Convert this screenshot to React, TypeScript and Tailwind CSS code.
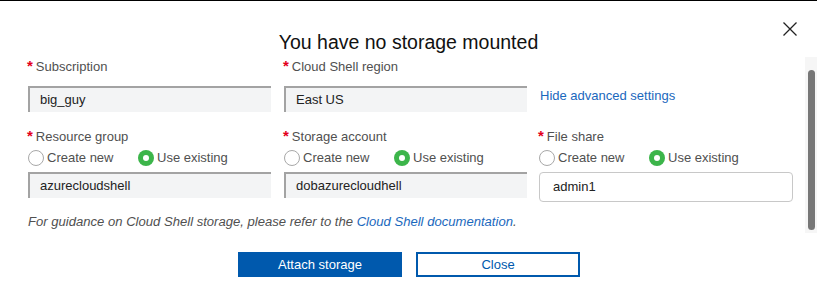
import React from "react";

function Label({ text }: { text: string }) {
  return (
    <div className="flex items-start h-[16px] leading-[16px] text-[13px] text-[#505050]">
      <span className="text-[#e3001b] text-[15px] font-bold leading-[14px] mr-[3px] ml-[-1px]">*</span>
      <span>{text}</span>
    </div>
  );
}

function Radio({ checked, label, wide }: { checked?: boolean; label: string; wide?: boolean }) {
  return (
    <div className={`flex items-center gap-[3px] ${wide ? "w-[110px]" : ""}`}>
      {checked ? (
        <span className="w-[16px] h-[16px] rounded-full bg-[#3cb54a] flex items-center justify-center">
          <span className="w-[6px] h-[6px] rounded-full bg-white" />
        </span>
      ) : (
        <span className="w-[16px] h-[16px] rounded-full border border-[#a8a8a8] bg-white" />
      )}
      <span className="text-[13px] leading-[16px] text-[#505050]">{label}</span>
    </div>
  );
}

function GreyInput({ value }: { value: string }) {
  return (
    <div className="w-[243px] h-[26px] bg-[#f3f4f5] border-t-2 border-l-2 border-[#a3a3a3] pl-[10px] text-[13px] leading-[24px] text-[#222]">
      {value}
    </div>
  );
}

export default function App() {
  return (
    <div className="relative w-[817px] h-[307px] bg-white border-t border-black overflow-hidden font-['Liberation_Sans',Arial,sans-serif]">
      <button className="absolute left-[783px] top-[21px] w-[14px] h-[14px]">
        <svg width="14" height="14" viewBox="0 0 14 14">
          <path d="M0.5 0.5 L13.5 13.5 M13.5 0.5 L0.5 13.5" stroke="#222" strokeWidth="1.3" fill="none" />
        </svg>
      </button>

      <div className="absolute left-[805px] top-[56px] w-[12px] h-[176px] bg-[#f6f6f6]">
        <div className="ml-[3px] mt-[13px] w-[7px] h-[160px] rounded-full bg-[#777]" />
      </div>

      <h1 className="pt-[29px] w-[817px] text-center text-[19.5px] leading-[24px] text-[#111]">
        You have no storage mounted
      </h1>

      <div className="flex flex-col pl-[28px]">
        <div className="grid grid-cols-[256px_255px_254px] mt-[5px]">
          <div className="flex flex-col">
            <Label text="Subscription" />
            <div className="mt-[11px]">
              <GreyInput value="big_guy" />
            </div>
          </div>
          <div className="flex flex-col">
            <Label text="Cloud Shell region" />
            <div className="mt-[11px]">
              <GreyInput value="East US" />
            </div>
          </div>
          <div className="flex flex-col">
            <div className="h-[16px]" />
            <div className="mt-[13px] pl-[1px] text-[13px] leading-[16px] text-[#1a68bd]">Hide advanced settings</div>
          </div>
        </div>

        <div className="grid grid-cols-[256px_255px_254px] mt-[17px] items-start">
          <div className="flex flex-col">
            <Label text="Resource group" />
            <div className="flex h-[17px] mt-[4px]">
              <Radio label="Create new" wide />
              <Radio label="Use existing" checked />
            </div>
            <div className="mt-[6px]">
              <GreyInput value="azurecloudshell" />
            </div>
          </div>
          <div className="flex flex-col">
            <Label text="Storage account" />
            <div className="flex h-[17px] mt-[4px]">
              <Radio label="Create new" wide />
              <Radio label="Use existing" checked />
            </div>
            <div className="mt-[6px]">
              <GreyInput value="dobazurecloudhell" />
            </div>
          </div>
          <div className="flex flex-col">
            <Label text="File share" />
            <div className="flex h-[17px] mt-[4px]">
              <Radio label="Create new" wide />
              <Radio label="Use existing" checked />
            </div>
            <div className="mt-[6px] w-[254px] h-[30px] rounded-[4px] border border-[#c8c8c8] bg-white pl-[13px] text-[13px] leading-[28px] text-[#222]">
              admin1
            </div>
          </div>
        </div>

        <p className="mt-[12px] text-[13.08px] leading-[16px] italic text-[#505050]">
          For guidance on Cloud Shell storage, please refer to the{" "}
          <span className="text-[#1a68bd]">Cloud Shell documentation</span>.
        </p>
      </div>

      <div className="flex justify-center gap-[14px] mt-[22px] w-[817px] pl-[1px]">
        <button className="w-[164px] h-[25px] bg-[#0059ad] text-white text-[13px] leading-[25px]">Attach storage</button>
        <button className="w-[164px] h-[25px] border-2 border-[#0059ad] text-[#0059ad] text-[13px] leading-[21px] bg-white">Close</button>
      </div>
    </div>
  );
}
